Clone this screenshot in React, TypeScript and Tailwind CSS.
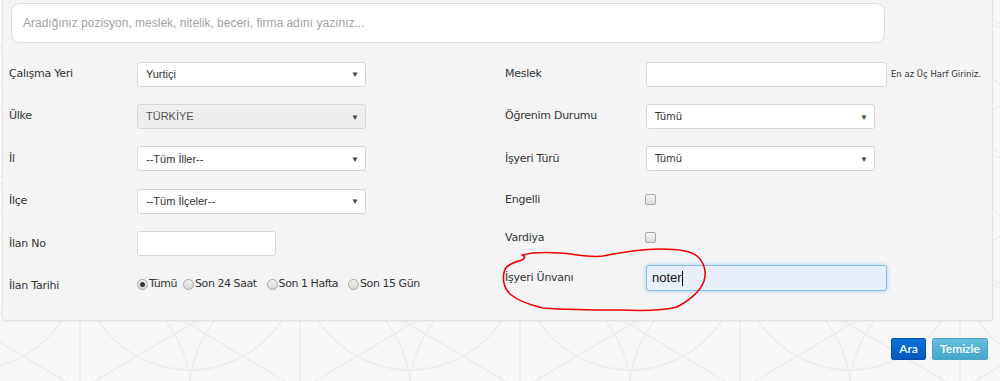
import React from "react";

const labelCls = "text-[11px] text-[#333] font-['DejaVu_Sans',sans-serif] tracking-[-0.25px]";

function Select({ value, w, disabled }: { value: string; w: string; disabled?: boolean }) {
  return (
    <div
      className={`${w} h-[25px] rounded-[3px] border border-[#d6d6d6] flex items-center justify-between pl-[8px] pr-[6px] ${
        disabled ? "bg-[#eeeeee] text-[#555]" : "bg-white text-[#333]"
      }`}
    >
      <span className="text-[11px] font-['Liberation_Sans',Arial,sans-serif]">{value}</span>
      <span className="text-[8px] text-[#444] leading-none">▼</span>
    </div>
  );
}

function Select2({ value, w }: { value: string; w: string }) {
  return (
    <div className={`${w} h-[25px] rounded-[3px] border border-[#d6d6d6] bg-white flex items-center justify-between pl-[8px] pr-[6px] text-[#333]`}>
      <span className="text-[10px] font-['DejaVu_Sans',sans-serif]">{value}</span>
      <span className="text-[8px] text-[#444] leading-none">▼</span>
    </div>
  );
}

function Row({ label, children, h = "h-[42.4px]", lw = "w-[128px]" }: { label: string; children?: React.ReactNode; h?: string; lw?: string }) {
  return (
    <div className={`flex items-center ${h}`}>
      <div className={`${lw} shrink-0 ${labelCls}`}>{label}</div>
      {children}
    </div>
  );
}

function Checkbox() {
  return <div className="w-[11px] h-[11px] rounded-[2px] border border-[#a9a9a9] bg-gradient-to-b from-[#f4f4f4] to-[#dcdcdc]" />;
}

function Radio({ checked }: { checked?: boolean }) {
  return (
    <div className="w-[11px] h-[11px] rounded-full border border-[#a9a9a9] bg-gradient-to-b from-[#f2f2f2] to-[#d6d6d6] flex items-center justify-center">
      {checked && <div className="w-[5px] h-[5px] rounded-full bg-[#333]" />}
    </div>
  );
}

function Background() {
  return (
    <svg className="absolute inset-0" width="1000" height="381">
      <defs>
        <pattern id="p" width="220" height="130" patternUnits="userSpaceOnUse" x="-30" y="0">
          <g fill="none" stroke="#ececec" strokeWidth="1.5">
            <circle cx="0" cy="0" r="110" />
            <circle cx="220" cy="0" r="110" />
            <circle cx="110" cy="130" r="110" />
            <circle cx="0" cy="260" r="110" />
            <circle cx="220" cy="260" r="110" />
            <path d="M0 65 L110 0 L220 65 L110 130 Z" />
            <line x1="110" y1="0" x2="110" y2="130" />
          </g>
        </pattern>
      </defs>
      <rect width="1000" height="381" fill="#f8f8f8" />
      <rect width="1000" height="381" fill="url(#p)" />
    </svg>
  );
}

export default function App() {
  return (
    <div className="relative w-[1000px] h-[381px] overflow-hidden bg-[#f8f8f8]">
      <Background />
      <div className="relative flex flex-col">
        {/* Panel */}
        <div className="ml-[2px] w-[991px] h-[321px] bg-[#f4f4f4] border-x border-b border-[#e2e2e2] rounded-b-[3px] shadow-[0_1px_1px_rgba(0,0,0,0.04)]">
          <div className="ml-[8px] mt-[3px] w-[874px] h-[40px] bg-white border border-[#dcdcdc] rounded-[9px] flex items-center pl-[11px]">
            <span className="text-[12px] text-[#a3a3a3] font-['Liberation_Sans',Arial,sans-serif]">
              Aradığınız pozisyon, meslek, nitelik, beceri, firma adını yazınız...
            </span>
          </div>
          <div className="flex mt-[10px]">
            {/* Left column */}
            <div className="ml-[6px] w-[496px] flex flex-col">
              <Row label="Çalışma Yeri"><Select value="Yurtiçi" w="w-[229px]" /></Row>
              <Row label="Ülke"><Select value="TÜRKİYE" w="w-[229px]" disabled /></Row>
              <Row label="İl"><Select value="--Tüm İller--" w="w-[229px]" /></Row>
              <Row label="İlçe"><Select value="--Tüm İlçeler--" w="w-[229px]" /></Row>
              <Row label="İlan No">
                <div className="w-[139px] h-[25px] rounded-[3px] border border-[#d6d6d6] bg-white" />
              </Row>
              <Row label="İlan Tarihi">
                <div className="flex items-center -mt-[3px] text-[11px] text-[#333] font-['DejaVu_Sans',sans-serif] tracking-[-0.45px]">
                  <Radio checked />
                  <span className="ml-[1px]">Tümü</span>
                  <span className="ml-[6px]"><Radio /></span>
                  <span className="ml-[1px]">Son 24 Saat</span>
                  <span className="ml-[10px]"><Radio /></span>
                  <span className="ml-[1px]">Son 1 Hafta</span>
                  <span className="ml-[10px]"><Radio /></span>
                  <span className="ml-[1px]">Son 15 Gün</span>
                </div>
              </Row>
            </div>
            {/* Right column */}
            <div className="flex flex-col">
              <Row label="Meslek" lw="w-[141px]">
                <div className="w-[241px] h-[25px] rounded-[3px] border border-[#d6d6d6] bg-white" />
                <span className="ml-[4px] text-[8.5px] text-[#333] font-['DejaVu_Sans',sans-serif]">En az Üç Harf Giriniz.</span>
              </Row>
              <Row label="Öğrenim Durumu" lw="w-[141px]"><Select2 value="Tümü" w="w-[229px]" /></Row>
              <Row label="İşyeri Türü" lw="w-[141px]"><Select2 value="Tümü" w="w-[229px]" /></Row>
              <Row label="Engelli" lw="w-[140px]" h="h-[40px]"><div className="-mt-[2px]"><Checkbox /></div></Row>
              <Row label="Vardiya" lw="w-[140px]" h="h-[37px]"><div className="-mt-[2px]"><Checkbox /></div></Row>
              <Row label="İşyeri Ünvanı" lw="w-[141px]" h="h-[42px]">
                <div className="w-[241px] h-[26px] rounded-[3px] border border-[#8cbbe6] bg-[#e8f0fe] shadow-[0_0_4px_rgba(102,175,233,0.6)] flex items-center pl-[5px]">
                  <span className="text-[13px] text-[#111] font-['Liberation_Sans',Arial,sans-serif]">noter</span>
                  <span className="w-[1px] h-[15px] bg-black" />
                </div>
              </Row>
            </div>
          </div>
        </div>
        {/* Buttons */}
        <div className="flex justify-end gap-[6px] mt-[17px] mr-[12px]">
          <button className="h-[22px] w-[35px] rounded-[2px] border border-[#0550a8] bg-gradient-to-b from-[#0a72d8] to-[#0557c0] text-white text-[12px] font-['Lato',sans-serif] font-semibold">
            Ara
          </button>
          <button className="h-[22px] w-[56px] rounded-[2px] border border-[#4aa6c6] bg-gradient-to-b from-[#63bedd] to-[#45a8cc] text-white text-[12px] font-['Lato',sans-serif] font-semibold">
            Temizle
          </button>
        </div>
      </div>
      {/* Red hand-drawn annotation */}
      <svg className="absolute inset-0 pointer-events-none" width="1000" height="381">
        <path
          d="M523 255 C533 252 543 252 560 253 C575 254 590 258 603 256 C618 253 640 249 660 249 C675 249 690 250 697 256 C704 262 707 272 704 281 C700 292 690 300 677 307 C663 311 645 311 620 310 C595 310 570 310 543 308 C530 305 518 301 510 294 C503 287 502 277 505 269 C508 264 515 262 522 260 C526 258 525 256 522 255"
          fill="none"
          stroke="#ee0000"
          strokeWidth="1.6"
          strokeLinecap="round"
        />
      </svg>
    </div>
  );
}
